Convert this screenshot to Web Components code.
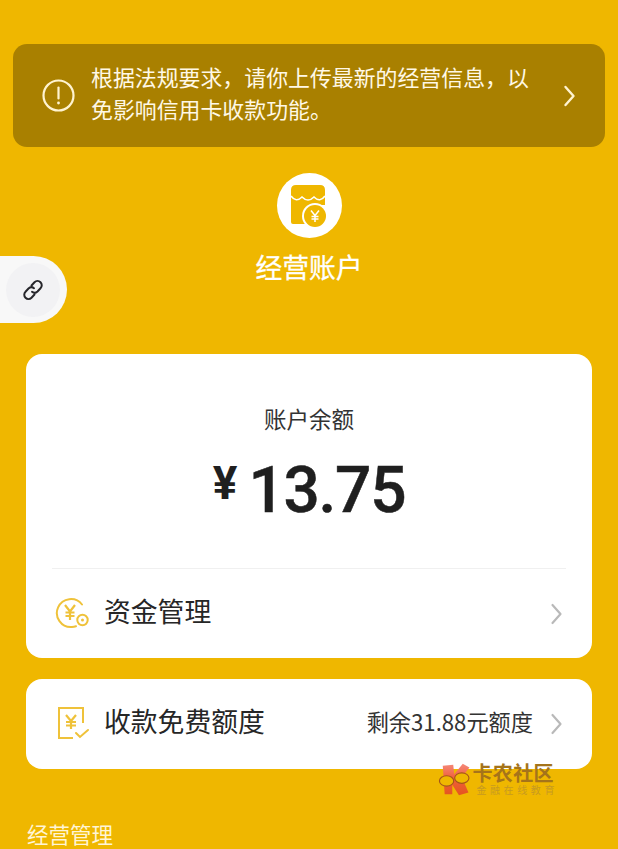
<!DOCTYPE html>
<html lang="zh">
<head>
<meta charset="utf-8">
<title>经营账户</title>
<style>
  html, body { margin: 0; height: 849px; overflow: hidden; }
  body {
    position: relative; background: #efb700;
    font-family: "Noto Sans CJK SC", "Noto Sans", sans-serif;
    padding-top: 44px; box-sizing: border-box;
  }
</style>
</head>
<body>
<notice-banner>根据法规要求，请你上传最新的经营信息，以免影响信用卡收款功能。</notice-banner>
<account-hero>经营账户</account-hero>
<float-link></float-link>
<balance-card label="账户余额" amount="13.75">
  <list-row label="资金管理">
    <svg slot="icon" width="36" height="32" viewBox="0 0 36 32" fill="none" stroke="#efc23a" stroke-width="2">
      <path d="M27 7.500A14 14 0 1 0 17 30a14 14 0 0 0 4-.8" stroke-linecap="round"/>
      <path d="M10 8l5 6.500L20 8M15 14.500V23M10.500 15.500h9M10.500 19h9" stroke-width="2.200"/>
      <circle cx="27.500" cy="23" r="5.200"/>
      <circle cx="27.500" cy="23" r="1.500" fill="#efc23a" stroke="none"/>
    </svg>
  </list-row>
</balance-card>
<info-card>
  <list-row label="收款免费额度" detail="剩余31.88元额度">
    <svg slot="icon" width="36" height="34" viewBox="0 0 36 34" fill="none" stroke="#efc23a" stroke-width="2">
      <path d="M28 17V2H4v30h14"/>
      <path d="M11 9l5 6 5-6M16 15v8M11 16h10M11 19.500h10" stroke-width="2.200"/>
      <path d="M21 27l4 4 8-7" stroke-linecap="round"/>
    </svg>
  </list-row>
</info-card>
<section-title>经营管理</section-title>
<wm-badge></wm-badge>

<script>
const chevron = (color, w, h, sw) => `<svg width="${w}" height="${h}" viewBox="0 0 12 22" fill="none" stroke="${color}" stroke-width="${sw}" stroke-linecap="round" stroke-linejoin="round"><path d="M2 2l8 9-8 9"/></svg>`;

class NoticeBanner extends HTMLElement {
  constructor() {
    super();
    this.attachShadow({ mode: 'open' });
    this.shadowRoot.innerHTML = `
      <style>
        :host { display: flex; align-items: center; justify-content: space-between; height: 103px; margin: 0 13px; padding: 0 29px; box-sizing: border-box; background: #a98000; border-radius: 14px; color: #fff8e6; }
        .alert { flex: none; width: 33px; height: 33px; margin-right: 16px; }
        .msg { flex: none; font-size: 21.900px; line-height: 31.500px; width: 442px; padding-bottom: 6px; }
        .spacer { flex: 1; }
      </style>
      <svg class="alert" viewBox="0 0 33 33" fill="none" stroke="#fff3d0" stroke-width="2.200">
        <circle cx="16.500" cy="16.500" r="15"/>
        <path d="M16.500 8.500v11" stroke-linecap="round"/>
        <circle cx="16.500" cy="24" r="1.400" fill="#fff3d0" stroke="none"/>
      </svg>
      <div class="msg"><slot></slot></div>
      <div class="spacer"></div>
      ${chevron('#fff3d0', 13, 22, 2.400)}
    `;
  }
}

class AccountHero extends HTMLElement {
  constructor() {
    super();
    this.attachShadow({ mode: 'open' });
    this.shadowRoot.innerHTML = `
      <style>
        :host { display: flex; flex-direction: column; align-items: center; gap: 11px; margin-top: 26px; color: #fff; }
        .logo { width: 65px; height: 65px; border-radius: 50%; background: #fff; display: flex; align-items: center; justify-content: center; }
        .name { font-size: 26.800px; line-height: 36px; font-weight: 400; padding-bottom: 1px; -webkit-text-stroke: .3px #fff; }
      </style>
      <div class="logo">
        <svg width="40" height="42" viewBox="0 0 40 42">
          <path d="M2 5Q2 0 7 0H31Q36 0 36 5V20H20V39H4Q2 39 2 37Z" fill="#efb700"/>
          <path d="M2 11Q7 18 13 12Q19 18 25 12Q31 18 36 11" fill="none" stroke="#fff" stroke-width="1.600"/>
          <circle cx="26" cy="31" r="13" fill="#fff"/>
          <circle cx="26" cy="31" r="11" fill="#efb700"/>
          <path d="M22 25.500l4 5 4-5M26 30.500V37M22.500 31.500h7M22.500 34h7" fill="none" stroke="#fff" stroke-width="1.500"/>
        </svg>
      </div>
      <div class="name"><slot></slot></div>
    `;
  }
}

class FloatLink extends HTMLElement {
  constructor() {
    super();
    this.attachShadow({ mode: 'open' });
    this.shadowRoot.innerHTML = `
      <style>
        :host { position: absolute; left: 0; top: 256px; width: 67px; height: 67px; background: #f8f8f8; border-radius: 0 34px 34px 0; display: flex; align-items: center; justify-content: flex-end; padding-right: 7px; box-sizing: border-box; }
        .in { width: 54px; height: 54px; border-radius: 50%; background: #f2f2f4; display: flex; align-items: center; justify-content: center; }
      </style>
      <div class="in">
        <svg width="26" height="26" viewBox="0 0 26 26" fill="none" stroke="#26262b" stroke-width="2" stroke-linecap="round">
          <path d="M11.500 8.500l3-3.200a4.200 4.200 0 0 1 6 6l-3 3.200a4.200 4.200 0 0 1-5.500.3"/>
          <path d="M14.500 17.500l-3 3.200a4.200 4.200 0 0 1-6-6l3-3.200a4.200 4.200 0 0 1 5.500-.3"/>
        </svg>
      </div>
    `;
  }
}

class BalanceCard extends HTMLElement {
  constructor() {
    super();
    this.attachShadow({ mode: 'open' });
    this.shadowRoot.innerHTML = `
      <style>
        :host { display: block; margin: 68px 26px 0; height: 304px; box-sizing: border-box; padding-top: 49px; background: #fff; border-radius: 16px; color: #1f1f1f; }
        .label { font-size: 22.500px; line-height: 30px; text-align: center; color: #333; }
        .amount { display: flex; justify-content: center; align-items: flex-start; gap: 11px; height: 80px; margin-top: 16px; font-family: Roboto, sans-serif; font-weight: 500; line-height: 80px; }
        .unit { font-size: 46px; line-height: 68px; font-weight: 700; }
        .num { font-size: 64px; letter-spacing: -1.300px; margin-top: 2px; -webkit-text-stroke: .5px #1f1f1f; }
        hr { border: 0; border-top: 1px solid #f0f0f0; margin: 39px 26px 0; }
      </style>
      <div class="label"></div>
      <div class="amount"><span class="unit">¥</span><span class="num"></span></div>
      <hr>
      <slot></slot>
    `;
    this.shadowRoot.querySelector('.label').textContent = this.getAttribute('label');
    this.shadowRoot.querySelector('.num').textContent = this.getAttribute('amount');
  }
}

class InfoCard extends HTMLElement {
  constructor() {
    super();
    this.attachShadow({ mode: 'open' });
    this.shadowRoot.innerHTML = `
      <style>
        :host { display: block; margin: 21px 26px 0; background: #fff; border-radius: 16px; }
      </style>
      <slot></slot>
    `;
  }
}

class ListRow extends HTMLElement {
  constructor() {
    super();
    this.attachShadow({ mode: 'open' });
    this.shadowRoot.innerHTML = `
      <style>
        :host { display: flex; align-items: center; height: 90px; padding: 0 29px; box-sizing: border-box; color: #262626; }
        .icon { flex: none; width: 36px; margin-right: 13px; display: flex; margin-top: -2px; }
        .label { flex: 1; font-size: 26.800px; white-space: nowrap; padding-bottom: 7px; }
        .detail { font-size: 22.200px; color: #333; margin-right: 17px; white-space: nowrap; padding-bottom: 7px; }
      </style>
      <div class="icon"><slot name="icon"></slot></div>
      <div class="label"></div>
      <div class="detail"></div>
      ${chevron('#b9b9b9', 13, 22, 2.200)}
    `;
    this.shadowRoot.querySelector('.label').textContent = this.getAttribute('label');
    this.shadowRoot.querySelector('.detail').textContent = this.getAttribute('detail') || '';
  }
}

class SectionTitle extends HTMLElement {
  constructor() {
    super();
    this.attachShadow({ mode: 'open' });
    this.shadowRoot.innerHTML = `
      <style>
        :host { display: block; margin: 50px 0 0 27px; font-size: 21.500px; line-height: 30px; color: #fff5d6; }
      </style>
      <slot></slot>
    `;
  }
}

// watermark sits over the card edge
class WmBadge extends HTMLElement {
  constructor() {
    super();
    this.attachShadow({ mode: 'open' });
    this.shadowRoot.innerHTML = `
      <style>
        :host { position: absolute; left: 438px; top: 762px; width: 120px; height: 36px; display: flex; gap: 2px; }
        .txt { display: flex; flex-direction: column; }
        .a { font-size: 20px; line-height: 22px; font-weight: 700; color: #a5741a; letter-spacing: .4px; white-space: nowrap; }
        .b { font-size: 10px; line-height: 12px; color: #c79a20; letter-spacing: 3.600px; margin-left: 4px; white-space: nowrap; }
      </style>
      <svg width="34" height="36" viewBox="0 0 34 36">
        <defs><linearGradient id="k" x1="0" y1="0" x2="0" y2="1"><stop offset="0" stop-color="#f58a7c"/><stop offset=".45" stop-color="#f0603a"/><stop offset="1" stop-color="#e4551e"/></linearGradient></defs>
        <path d="M5 3L16 2 17 12 26 1 33 5 25 15 32 31 22 34 15 23 15 33 7 33Z" fill="url(#k)"/>
        <ellipse cx="9" cy="19" rx="7.500" ry="5.500" fill="#efb700" stroke="#a5541a" stroke-width="1.200"/>
        <ellipse cx="25" cy="16" rx="7.500" ry="5.500" fill="#efb700" stroke="#a5541a" stroke-width="1.200"/>
      </svg>
      <div class="txt"><span class="a">卡农社区</span><span class="b">金融在线教育</span></div>
    `;
  }
}

customElements.define('notice-banner', NoticeBanner);
customElements.define('account-hero', AccountHero);
customElements.define('float-link', FloatLink);
customElements.define('balance-card', BalanceCard);
customElements.define('info-card', InfoCard);
customElements.define('list-row', ListRow);
customElements.define('section-title', SectionTitle);
customElements.define('wm-badge', WmBadge);
</script>
</body>
</html>
